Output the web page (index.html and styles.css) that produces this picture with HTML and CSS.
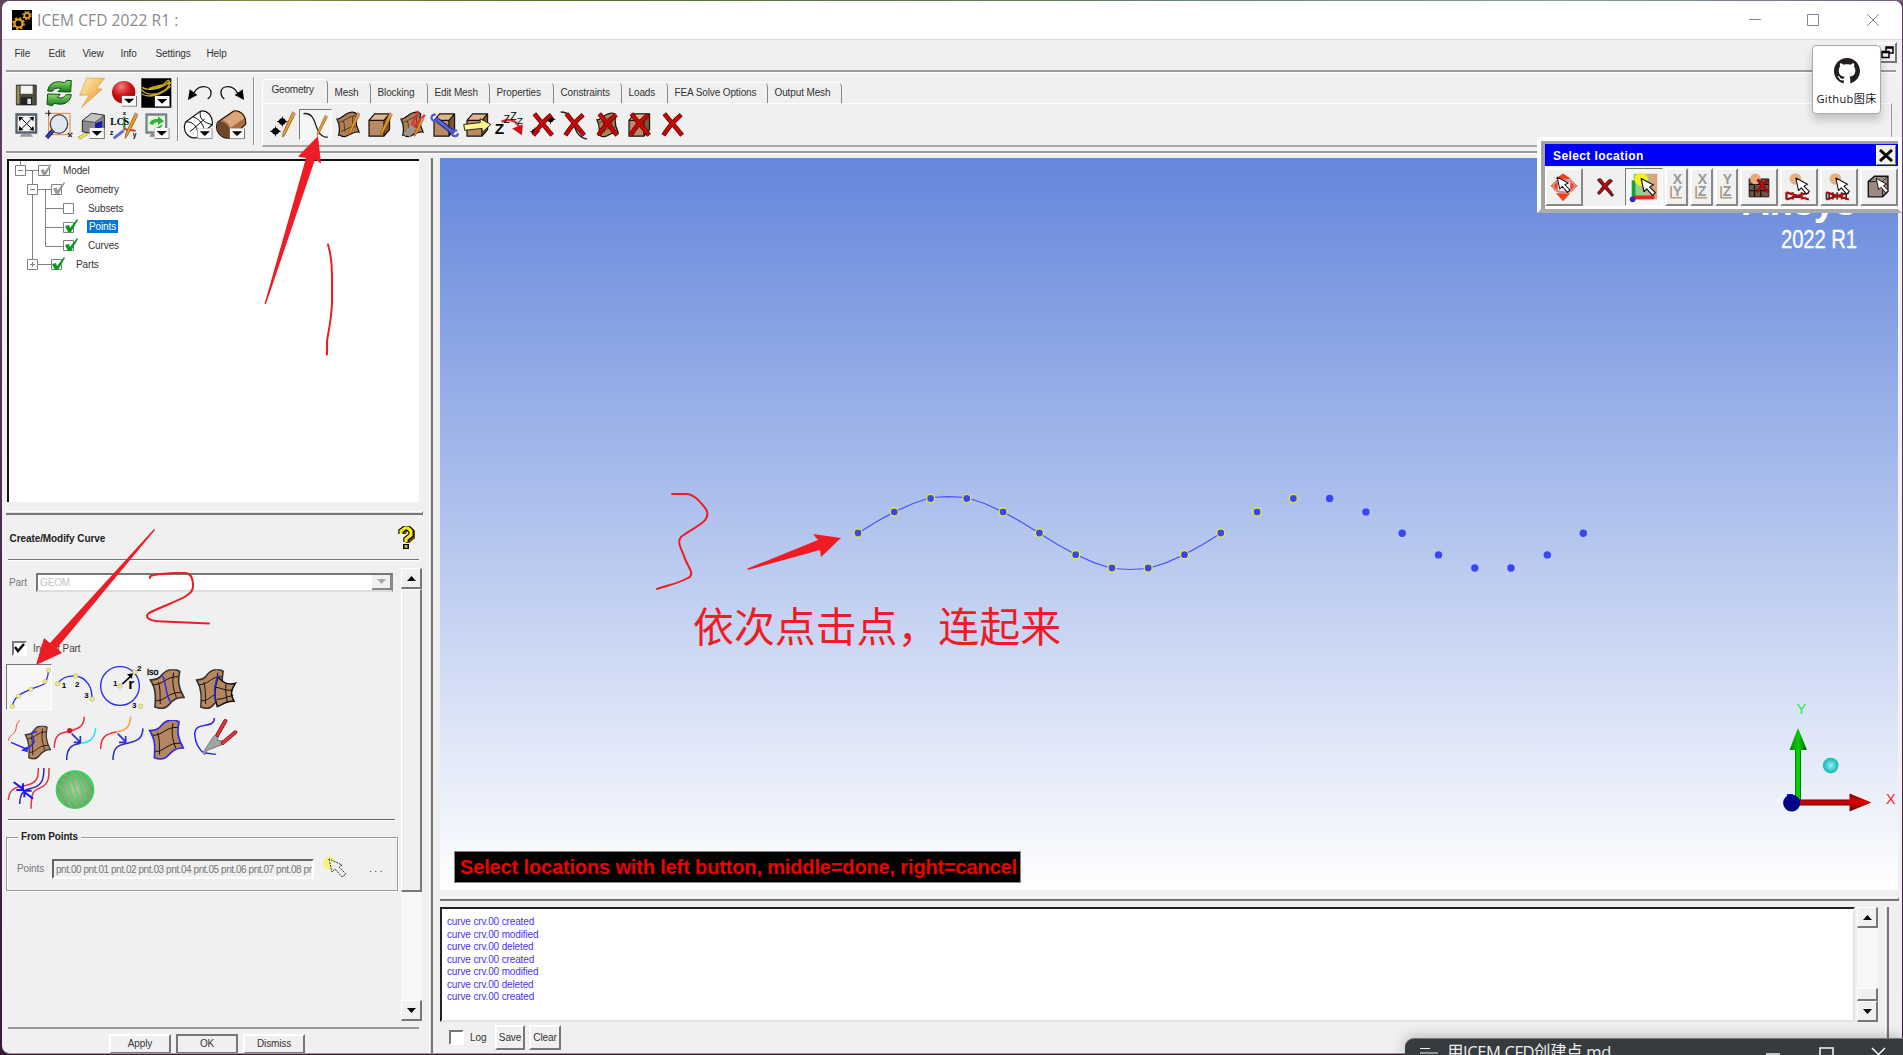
FILE: index.html
```html
<!DOCTYPE html>
<html lang="en">
<head>
<meta charset="utf-8">
<title>ICEM CFD 2022 R1</title>
<link rel="stylesheet" href="styles.css">
</head>
<body>
<svg class="defs" width="0" height="0" aria-hidden="true">
  <defs>
    <linearGradient id="gold" x1="0" y1="0" x2="1" y2="1"><stop offset="0" stop-color="#fff0b8"/><stop offset=".5" stop-color="#f5c067"/><stop offset="1" stop-color="#d07a10"/></linearGradient>
    <radialGradient id="redball" cx=".4" cy=".25" r=".8"><stop offset="0" stop-color="#f08080"/><stop offset=".5" stop-color="#cc1417"/><stop offset="1" stop-color="#8a0004"/></radialGradient>
    <linearGradient id="leaf" x1="0" y1="0" x2="0" y2="1"><stop offset="0" stop-color="#8fdc6a"/><stop offset="1" stop-color="#157a1c"/></linearGradient>
    <radialGradient id="cyanball"><stop offset="0" stop-color="#8ff5f5"/><stop offset="1" stop-color="#12b4b4"/></radialGradient>
    <radialGradient id="greenball"><stop offset="0" stop-color="#b4c8a0"/><stop offset="1" stop-color="#6ba068"/></radialGradient>
    <linearGradient id="hand" x1="0" y1="0" x2="1" y2="0"><stop offset="0" stop-color="#7fd98a"/><stop offset=".5" stop-color="#b9c08a"/><stop offset="1" stop-color="#e59a7a"/></linearGradient>
    <linearGradient id="gcone"><stop offset="0" stop-color="#0a7a0a"/><stop offset=".5" stop-color="#05d005"/><stop offset="1" stop-color="#065c06"/></linearGradient>
    <linearGradient id="rcone" x1="0" y1="0" x2="0" y2="1"><stop offset="0" stop-color="#7a0000"/><stop offset=".45" stop-color="#e00000"/><stop offset="1" stop-color="#6a0000"/></linearGradient>
    <symbol id="pencil" viewBox="0 0 16 30"><path d="M13 1l3 2L5 25l-3 4 .5-5z" fill="#f0a020" stroke="#7a4a10" stroke-width=".8"/><path d="M13 1l3 2-1.500 3-3-2z" fill="#c98"/></symbol>
    <symbol id="surf" viewBox="0 0 32 36" preserveAspectRatio="none"><path d="M3 11C9 11 12 3 20 2c3-1 6 0 8 2-2 8-1 16 3 24-7-2-12 5-18 6-5 1-6-3-8-2C7 24 6 17 3 11z" fill="#b08055" stroke="#111" stroke-width="1.600"/><path d="M6 15c7-1 11-8 20-9M8 27c7-1 10-7 19-6M11 13c2 6 1 10 2 15M23 7c-1 6 0 11 1 16" fill="none" stroke="#3a2614" stroke-width="1"/></symbol>
    <symbol id="cube" viewBox="0 0 26 28"><path d="M2 9h16v17H2z" fill="#b98a63"/><path d="M2 9l6-7h16l-6 7z" fill="#dcb78f"/><path d="M18 9l6-7v17l-6 7z" fill="#7a5637"/><path d="M2 9h16v17H2zM2 9l6-7h16v17l-6 7M18 9l6-7" fill="none" stroke="#1c120a" stroke-width="1.300" stroke-linejoin="round"/></symbol>
    <symbol id="redx" viewBox="0 0 26 28"><path d="M4 2c5 6 12 14 19 23M22 3C15 9 8 17 3 25" fill="none" stroke="#600" stroke-width="5"/><path d="M4 2c5 6 12 14 19 23M22 3C15 9 8 17 3 25" fill="none" stroke="#c00a0a" stroke-width="3.600"/></symbol>
    <symbol id="star" viewBox="0 0 12 12"><path d="M6 0l1 4 5 2-5 2-1 4-1-4-5-2 5-2z"/><circle cx="6" cy="6" r="3.400"/></symbol>
    <symbol id="drop" viewBox="0 0 46 33"><path d="M0 0h46v33H0z" fill="#777"/><path d="M0 0h43v30H0z" fill="#fafafa"/><path d="M7 9h31L22 23z" fill="#000"/></symbol>
    <symbol id="cursor" viewBox="0 0 18 20"><path d="M1 1l3 14 3-3 6 7 3-3-6-6 4-2z" fill="#fff" stroke="#111" stroke-width="1.200" stroke-linejoin="round"/></symbol>
    <symbol id="bigsurf" viewBox="0 0 108 120" preserveAspectRatio="none"><path d="M4 32c18-2 25-2 37-18C58-4 80-2 92 6c-6 30-4 50 13 78-20 0-30 5-44 21-12 14-28 14-43 8C20 86 22 58 4 32z" fill="#b58660"/><path d="M10 46c34 2 40-26 80-24M18 94c30 4 38-28 80-24M28 38c8 26 4 44 6 66M74 10c-6 34 0 50 8 74" fill="none" stroke="#111" stroke-width="3"/></symbol>
    <symbol id="bigedge" viewBox="0 0 108 120" preserveAspectRatio="none"><path d="M4 32c18-2 25-2 37-18C58-4 80-2 92 6c-6 30-4 50 13 78-20 0-30 5-44 21-12 14-28 14-43 8C20 86 22 58 4 32z" fill="none" stroke="currentColor" stroke-width="5"/></symbol>
    <symbol id="greencheck" viewBox="0 0 15 14"><path d="M1 7l4-1 1 3L13 0l1 1L7 13H4z" fill="#0a9a1a"/></symbol>
    <symbol id="graycheck" viewBox="0 0 15 14"><path d="M1 7l4-1 1 3L13 0l1 1L7 13H4z" fill="#999"/></symbol>
  </defs>
</svg>

<main class="window">
  <header class="titlebar">
    <svg class="app-icon" width="20" height="20" viewBox="0 0 20 20"><path d="M0 0h20v20H0z"/><circle cx="6.500" cy="13.500" r="4" fill="none" stroke="#e9a21a" stroke-width="2.200"/><circle cx="6.500" cy="13.500" r="5.600" fill="none" stroke="#e9a21a" stroke-width="1.600" stroke-dasharray="2.200 2.200"/><circle cx="15" cy="5.500" r="2.600" fill="none" stroke="#e9a21a" stroke-width="1.800"/><circle cx="15" cy="5.500" r="4" fill="none" stroke="#e9a21a" stroke-width="1.300" stroke-dasharray="1.600 1.600"/></svg>
    <h1>ICEM CFD 2022 R1 :</h1>
    <svg class="winctl" width="130" height="14" viewBox="0 0 130 14" fill="none" stroke="#888" stroke-width="1"><path d="M0 6.500h12M58.500 1.500h11v11h-11zM118 1l12 12M130 1l-12 12"/></svg>
  </header>

  <nav class="menubar">
    <span>File</span><span>Edit</span><span>View</span><span>Info</span><span>Settings</span><span>Help</span>
  </nav>

  <section class="toolbar">
    <div class="group main-tools">
      <svg viewBox="32 230 97.500 96"><path d="M51 254h60v60H51z" fill="#4c4c3e" stroke="#222" stroke-width="2"/><path d="M64 256h36v24H64z" fill="#f4f4f4"/><path d="M64 291h34v23H64z" fill="#222"/><path d="M84 295h11v16H84z" fill="#ddd"/><path d="M53 256h7v54h-7z" fill="#909048"/></svg>
      <svg viewBox="130 230 97.500 96"><path d="M144 272c4-26 26-32 50-25l8-7 13 1-2 34-38-1 9-9c-12-4-20-1-26 8z" fill="url(#leaf)" stroke="#0b4a10" stroke-width="3"/><path d="M215 283c-4 26-26 33-50 26l-8 7-15-4 2-31 38 1-9 9c12 4 20 1 26-8z" fill="url(#leaf)" stroke="#0b4a10" stroke-width="3"/></svg>
      <svg viewBox="227 230 97.500 96"><path d="M262 233l54 1-25 31 18 1-63 56 24-38-29 1z" fill="url(#gold)" stroke="#c98a30" stroke-width="1.500"/></svg>
      <svg viewBox="325 230 97.500 96"><ellipse cx="372" cy="276" rx="35" ry="34" fill="url(#redball)"/><use href="#drop" x="366" y="286" width="46" height="33"/></svg>
      <svg viewBox="422 230 97.500 96"><path d="M426 234h90v88h-90z"/><path d="M426 268c15 18 45 17 66 4 25-15 22-40 10-29-14 18-33 22-52 21 25-10 42-10 66-16M428 261c20 12 56 7 84-18M428 281c18 12 56 6 86-24" fill="none" stroke="#c9ac15" stroke-width="4"/><use href="#drop" x="466" y="287" width="46" height="33"/></svg>
      <svg viewBox="32 330 97.500 96"><path d="M48 340h66v61H48z" fill="#566068"/><path d="M55 347h52v47H55z" fill="#f5f5f5"/><path d="M68 401h26l8 9H60z" fill="#9a9a9a"/><path d="M66 355l32 32M98 355l-32 32" stroke="#111" stroke-width="3"/><path d="M58 350l14 2-12 12zM104 350l-14 2 12 12zM58 392l14-2-12-12zM104 392l-14-2 12-12z"/></svg>
      <svg viewBox="130 330 97.500 96"><path d="M147 340h64v64h-64z" fill="none" stroke="#e0813c" stroke-width="3"/><path d="M137 340h18M147 331v18M205 399l13 13M218 399l-13 13" stroke="#111" stroke-width="4" stroke-dasharray="4 2"/><path d="M163 388l-22 25" stroke="#112" stroke-width="12"/><path d="M162 390l-20 22" stroke="#3040e0" stroke-width="7"/><ellipse cx="178" cy="372" rx="26" ry="28" fill="#dfe8f2" stroke="#444" stroke-width="4"/></svg>
      <svg viewBox="227 330 97.500 96"><path d="M249 362l28-22 38 6v40l-28 17-38-8z" fill="#8a8a8a" stroke="#222" stroke-width="3"/><path d="M249 362l28-22 38 6-28 21z" fill="#c4c4c4" stroke="#222" stroke-width="2"/><path d="M287 370l22-8v20l-22 6z" fill="#1a1aa8"/><path d="M236 411l24-12 5 5-23 14z" fill="#f2ef30" stroke="#333"/><use href="#drop" x="270" y="384" width="47" height="33"/></svg>
      <svg viewBox="325 330 97.500 96"><path d="M374 350v40" stroke="#1e8a2c" stroke-width="6"/><path d="M374 388l34 4" stroke="#d33" stroke-width="6"/><path d="M372 392l-30 23" stroke="#66c" stroke-width="9"/><g font-weight="700" font-family="Liberation Sans"><text x="332" y="376" font-family="Liberation Serif" font-size="30" textLength="56" lengthAdjust="spacingAndGlyphs">LCS</text><text x="369" y="346" font-size="18">x</text><text x="331" y="406" font-size="20">z</text><text x="399" y="410" font-size="20">y</text></g><use href="#pencil" x="370" y="336" width="46" height="82"/></svg>
      <svg viewBox="422 330 97.500 96"><path d="M438 340h66v61h-66z" fill="#7a848a"/><path d="M445 347h52v47h-52z" fill="#e4f5e4"/><path d="M456 401h24l8 9h-38z" fill="#888"/><path d="M450 371q5-16 26-14v-8l18 14-18 12v-8q-12-2-16 8zM490 372q-4 18-26 16" fill="#2fb236"/><use href="#drop" x="465" y="384" width="46" height="33"/></svg>
    </div>
    <i class="vsep"></i>
    <div class="group edit-tools">
      <svg viewBox="549 230 97.500 96"><path d="M580 281c14-30 50-27 53-5 1 10-4 16-10 20" fill="none" stroke="#111" stroke-width="4"/><path d="M564 299l5-32 23 17z"/></svg>
      <svg viewBox="646 230 97.500 96"><path d="M715 281c-14-30-50-27-51-5 0 10 4 16 10 20" fill="none" stroke="#111" stroke-width="4"/><path d="M733 299l-4-32-24 17z"/></svg>
      <svg viewBox="549 330 97.500 96"><path d="M557 366l44-32c18-6 38 12 36 40l-44 38c-28 8-48-20-36-46z" fill="#fff" stroke="#111" stroke-width="3.500"/><path d="M557 366c24-4 40 20 36 46M601 334c-4 20 8 34 36 40M578 350c14 4 32 18 34 40M570 395l44-38" fill="none" stroke="#111" stroke-width="3"/><use href="#drop" x="592" y="385" width="46" height="33"/></svg>
      <svg viewBox="646 330 97.500 96"><path d="M654 366l48-33c18-4 38 12 36 40l-44 40c-28 8-52-20-40-47z" fill="#a86e3e" stroke="#1c120a" stroke-width="3.500"/><path d="M654 366c24-6 42 20 40 47-24 4-48-20-40-47z" fill="#6d452a"/><path d="M668 360l36-25c16 0 24 8 30 20l-42 28c-4-10-12-20-24-23z" fill="#dca67a"/><use href="#drop" x="690" y="385" width="46" height="33"/></svg>
    </div>
    <i class="vsep tall"></i>
    <div class="notebook">
      <div class="tabs">
        <span class="tab active t0">Geometry</span><span class="tab t1">Mesh</span><span class="tab t2">Blocking</span><span class="tab t3">Edit Mesh</span><span class="tab t4">Properties</span><span class="tab t5">Constraints</span><span class="tab t6">Loads</span><span class="tab t7">FEA Solve Options</span><span class="tab t8">Output Mesh</span>
      </div>
      <div class="tabpage">
        <svg viewBox="0 0 32 32"><use href="#star" x="2" y="17" width="12" height="12"/><use href="#star" x="9" y="7" width="12" height="12"/><use href="#pencil" x="13" y="2" width="16" height="28"/></svg>
        <svg class="sunk" viewBox="0 0 32 32"><path d="M3 4c18-2 9 26 27 26" fill="none" stroke="#222" stroke-width="1.500"/><use href="#pencil" x="15" y="5" width="16" height="24"/></svg>
        <svg viewBox="0 0 32 32"><use href="#surf" x="2" y="2" width="26" height="28"/><use href="#pencil" x="14" y="3" width="15" height="25"/></svg>
        <svg viewBox="0 0 32 32"><use href="#cube" x="2" y="3" width="26" height="27"/><use href="#pencil" x="14" y="3" width="15" height="26"/></svg>
        <svg viewBox="0 0 32 32"><use href="#surf" x="1" y="2" width="26" height="28"/><path d="M14 18L21 2M16 19L28 6" stroke="#e0303a" stroke-width="2.500"/><path d="M7 27l8-10M11 28l6-9" stroke="#999" stroke-width="3"/><use href="#pencil" x="15" y="8" width="13" height="21"/></svg>
        <svg viewBox="0 0 32 32"><use href="#cube" x="2" y="3" width="26" height="27"/><path d="M6 10l19 15" stroke="#1a1a70" stroke-width="5"/><path d="M6 10l19 15" stroke="#5a68e0" stroke-width="3"/><circle cx="5" cy="9" r="3.200" fill="none" stroke="#4a55d0" stroke-width="2.200" stroke-dasharray="16 5"/><circle cx="26" cy="25" r="3" fill="none" stroke="#4a55d0" stroke-width="2.200" stroke-dasharray="16 5"/></svg>
        <svg viewBox="0 0 32 32"><use href="#cube" x="2" y="3" width="26" height="27"/><path d="M1 16l17-2v-4l11 6-9 8v-4L2 22z" fill="#fbf58c" stroke="#222"/></svg>
        <svg viewBox="0 0 32 32"><path d="M7 13q14-6 20 9" stroke="#d0353a" stroke-width="2.500" fill="none"/><path d="M18 20l11-4-1 11z" fill="#d01018"/><g font-family="Liberation Sans"><text x="0" y="26" font-weight="700" font-size="16">Z</text><text x="9" y="14" font-size="11">Z</text><text x="16" y="11" font-size="11">Z</text><text x="23" y="15" font-size="10">Z</text></g></svg>
        <svg viewBox="0 0 32 32"><use href="#star" x="18" y="5" width="11" height="11"/><use href="#star" x="2" y="18" width="11" height="11"/><use href="#redx" x="3" y="3" width="25" height="27"/></svg>
        <svg viewBox="0 0 32 32"><path d="M1 3c18 0 9 25 27 28" fill="none" stroke="#222" stroke-width="1.500"/><use href="#redx" x="3" y="3" width="25" height="27"/></svg>
        <svg viewBox="0 0 32 32"><use href="#surf" x="2" y="3" width="25" height="27"/><use href="#redx" x="3" y="3" width="25" height="27"/></svg>
        <svg viewBox="0 0 32 32"><use href="#cube" x="2" y="3" width="26" height="27"/><use href="#redx" x="3" y="3" width="25" height="27"/></svg>
        <svg viewBox="0 0 32 32"><use href="#redx" x="3" y="3" width="25" height="27"/></svg>
      </div>
    </div>
  </section>

  <div class="workspace">
    <aside class="side">
      <div class="tree">
        <svg width="90" height="120" viewBox="9 161 90 120" fill="none" stroke="#808080">
          <path d="M20.500 161v5M25 170.500h13M32.500 171v88M37.500 189.500h14M45.500 190v56M45.500 208.500h18M45.500 227.500h18M45.500 246.500h18M38 264.500h14"/>
          <g fill="#fff"><path d="M15.500 165.500h10v10h-10zM27.500 184.500h10v10h-10zM27.500 259.500h10v10h-10zM38.500 165.500h11v10h-11zM51.500 184.500h10v10h-10zM63.500 203.500h10v10h-10zM63.500 222.500h10v10h-10zM63.500 240.500h10v10h-10zM51.500 259.500h10v10h-10z"/></g>
          <path d="M18 170.500h5M30 189.500h5M30 264.500h5M32.500 262v5"/>
          <g stroke="none"><use href="#graycheck" x="39" y="164" width="14" height="12"/><use href="#graycheck" x="52" y="182" width="14" height="13"/><use href="#greencheck" x="64" y="219" width="15" height="14"/><use href="#greencheck" x="64" y="238" width="15" height="14"/><use href="#greencheck" x="51" y="257" width="15" height="14"/></g>
        </svg>
        <ul>
          <li class="l0">Model</li><li class="l1">Geometry</li><li class="l2">Subsets</li><li class="l2"><mark>Points</mark></li><li class="l2">Curves</li><li class="l1">Parts</li>
        </ul>
      </div>
      <div class="sash"></div>
      <div class="panel-head">
        <h2>Create/Modify Curve</h2>
        <svg width="17" height="25" viewBox="0 0 17 25"><path d="M6 8V6l3-3h3l3 3v5l-5 4v2" fill="none" stroke="#6a4208" stroke-width="4.500"/><path d="M3 8V5l4-3h3l3 3v4l-5 4v3" fill="none" stroke="#000" stroke-width="5.400"/><path d="M3 8V5l4-3h3l3 3v4l-5 4v3" fill="none" stroke="#f5ee10" stroke-width="3.200"/><path d="M5 18h6v5H5z"/><path d="M6.500 19h3v3h-3z" fill="#c8c010"/></svg>
      </div>
      <div class="panel">
        <div class="form">
          <div class="part-row"><label>Part</label><div class="combo"><span>GEOM</span><i><svg width="9" height="5"><path d="M0 0h9L4.500 5z" fill="#a8a8a8"/></svg></i></div></div>
          <div class="check-row"><i class="check"><svg width="11" height="11" viewBox="0 0 11 11"><path d="M1 4l3 4 6-7" fill="none" stroke="#000" stroke-width="2.400"/></svg></i><label>Inherit Part</label></div>
          <div class="tools">
            <svg class="sunk" viewBox="17 26 138 138"><path d="M34 156c4-32 30-42 58-54 36-14 46-14 49-29 5-14 6-22 6-31" fill="none" stroke="#2a2af0" stroke-width="4"/><g fill="#f0eb80" stroke="#86834a"><circle cx="34" cy="156" r="7"/><circle cx="53" cy="124" r="7"/><circle cx="92" cy="102" r="7"/><circle cx="136" cy="78" r="7"/><circle cx="148" cy="43" r="7"/></g></svg>
            <svg viewBox="155 26 138 138"><path d="M172 85c14-20 34-24 54-23 34 4 52 38 48 69" fill="none" stroke="#2a2af0" stroke-width="4"/><g fill="#f0eb80" stroke="#86834a"><circle cx="172" cy="85" r="7"/><circle cx="226" cy="62" r="7"/><circle cx="275" cy="131" r="7"/></g><g font-family="Liberation Sans" font-weight="700" font-size="24"><text x="184" y="97">1</text><text x="224" y="94">2</text><text x="252" y="127">3</text></g></svg>
            <svg viewBox="293 26 138 138"><circle cx="359" cy="92" r="58" fill="none" stroke="#2a2af0" stroke-width="4"/><path d="M366 86l28-26" stroke="#000" stroke-width="5"/><path d="M398 54l-18 3 14 13z"/><g fill="#f0eb80" stroke="#86834a"><circle cx="359" cy="92" r="7"/><circle cx="403" cy="50" r="7"/><circle cx="421" cy="153" r="7"/></g><g font-family="Liberation Sans" font-weight="700" font-size="24"><text x="338" y="91">1</text><text x="410" y="48">2</text><text x="395" y="158">3</text><text x="384" y="101" font-size="46">r</text></g></svg>
            <svg viewBox="431 26 138 138"><use href="#bigsurf" x="446" y="42" width="108" height="120"/><use href="#bigedge" x="446" y="42" width="108" height="120"/><path d="M487 62c12 22 8 60 24 78" fill="none" stroke="#2a2af0" stroke-width="4.500"/><text x="439" y="60" font-family="Liberation Sans" font-size="27" stroke="#000">Iso</text></svg>
            <svg viewBox="577 26 138 138"><use href="#bigsurf" x="584" y="42" width="98" height="120"/><use href="#bigedge" x="584" y="42" width="98" height="120"/><path d="M652 66c14 14 26 24 52 18-12 18-16 30-4 54-20-4-34 10-50 16-10-26-10-56 2-88z" fill="#b58660" stroke="#111" stroke-width="4.500"/><path d="M646 96c18 2 28 12 50 8M648 132c20 0 30-8 50-12M676 84c-2 20 0 38 4 58" fill="none" stroke="#111" stroke-width="3"/><path d="M654 60c-14 24-14 46-10 76" fill="none" stroke="#2a2af0" stroke-width="4"/></svg>
            <svg viewBox="17 180 138 138"><use href="#bigsurf" x="72" y="212" width="80" height="102"/><use href="#bigedge" x="72" y="212" width="80" height="102"/><path d="M59 197c-16 10-8 24-16 34-10 14-18 12-18 26" fill="none" stroke="#f04040" stroke-width="3"/><path d="M32 262l46 20M110 230c-22 0-16 12-10 24 6 14-14 20-24 32" fill="none" stroke="#2a2af0" stroke-width="4.500"/><path d="M62 286l20-12v18z" fill="#2a2af0"/></svg>
            <svg viewBox="155 180 138 138"><path d="M162 278c0-50 30-44 50-51 26-8 38-12 40-42" fill="none" stroke="#f03038" stroke-width="4.500"/><path d="M199 315c0-36 14-46 42-50" fill="none" stroke="#2a2ad0" stroke-width="4.500"/><path d="M240 265c34-4 44-20 46-46" fill="none" stroke="#20e4f0" stroke-width="4.500"/><circle cx="208" cy="227" r="8" fill="#d01830"/><path d="M214 236l24 24M240 243v19h-20" stroke="#2a2af0" stroke-width="5" fill="none"/></svg>
            <svg viewBox="293 180 138 138"><path d="M301 282c0-34 14-46 48-51" fill="none" stroke="#f03038" stroke-width="4.500"/><path d="M349 231c30-4 40-18 42-46" fill="none" stroke="#f8a040" stroke-width="4.500"/><path d="M338 315c0-46 24-46 46-51 32-8 42-16 44-44" fill="none" stroke="#2a2ad0" stroke-width="4.500"/><path d="M352 236l24 24M376 243v19h-20" stroke="#2a2af0" stroke-width="5" fill="none"/></svg>
            <svg viewBox="431 180 138 138"><use href="#bigsurf" x="444" y="195" width="108" height="120"/><use href="#bigedge" x="444" y="195" width="108" height="120" color="#2a2af0"/></svg>
            <svg viewBox="577 180 138 138"><path d="M641 189c0 36-56 6-59 48 2 28 10 46 30 58" fill="none" stroke="#2a2af0" stroke-width="4.500"/><path d="M606 294l30-46c6-10 14-10 18-6l-4 14 18 2c2 8-4 12-12 14l-36 14-8 14z" fill="#a4a4a4" stroke="#555" stroke-width="2"/><path d="M650 240l24-42M666 264l38-32" stroke="#8c1c22" stroke-width="12" stroke-linecap="round"/><path d="M650 240l24-42M666 264l38-32" stroke="#e0353c" stroke-width="7" stroke-linecap="round"/><path d="M614 294l32 4" stroke="#2a2af0" stroke-width="4"/></svg>
            <svg viewBox="17 332 138 138"><path d="M24 434c2-40 34-40 54-44 34-8 36-24 36-52M92 460c2-64 10-52 34-66 20-12 20-28 20-56" fill="none" stroke="#e8323c" stroke-width="4.500"/><path d="M58 446c2-48 24-42 44-50 26-10 28-28 29-58" fill="none" stroke="#2a2ab0" stroke-width="4.500"/><path d="M40 380l26 20M48 404h20v-20M98 430l-26-20M94 406H72v20" stroke="#1a1af0" stroke-width="6" fill="none"/></svg>
            <svg viewBox="155 332 138 138"><circle cx="224" cy="403" r="56" fill="url(#greenball)" stroke="#3ad05a" stroke-width="4"/><path d="M170 392c26-10 24 46 44 62M178 372c34-6 28 56 56 84M190 358c42 4 26 66 60 92M208 350c44 12 24 66 58 86M228 348c36 16 22 52 48 70M248 354c18 10 20 26 30 40M168 412c14 4 12 20 22 32" fill="none" stroke="#38e05a" stroke-width="4"/></svg>
          </div>
          <div class="rule"></div>
          <div class="fieldset">
            <h3>From Points</h3>
            <label>Points</label>
            <div class="entry">pnt.00 pnt.01 pnt.02 pnt.03 pnt.04 pnt.05 pnt.06 pnt.07 pnt.08 pr</div>
            <svg width="24" height="22" viewBox="0 0 24 22"><circle cx="6.500" cy="7" r="6.500" fill="#f6f27a"/><path d="M6 4l3 13 3-3 7 8 4-3-7-7 3-2z" fill="#eee" stroke="#333" stroke-dasharray="2 1" transform="translate(0 -1)"/></svg>
            <b>. . .</b>
          </div>
        </div>
        <div class="scroll">
          <i class="sbtn"><svg width="9" height="5"><path d="M4.500 0L9 5H0z"/></svg></i>
          <i class="thumb"></i><i class="gap"></i>
          <i class="sbtn"><svg width="9" height="5"><path d="M0 0h9L4.500 5z"/></svg></i>
        </div>
      </div>
      <div class="buttons"><button>Apply</button><button class="default">OK</button><button>Dismiss</button></div>
    </aside>
    <div class="vsash"></div>
    <section class="right">
      <svg class="viewport" width="1458" height="732" viewBox="440 158 1458 732" font-family="Liberation Sans">
        <defs><linearGradient id="sky" x1="0" y1="0" x2="0" y2="1"><stop offset="0" stop-color="#6487dc"/><stop offset="1" stop-color="#fff"/></linearGradient></defs>
        <path d="M440 158h1458v732H440z" fill="url(#sky)"/>
        <text x="1742" y="215" font-size="40" font-weight="700" fill="#fff" textLength="114" lengthAdjust="spacingAndGlyphs">Ansys</text>
        <text x="1781" y="248" font-size="25" fill="#fff" stroke="#fff" stroke-width=".3" textLength="76" lengthAdjust="spacingAndGlyphs">2022 R1</text>
        <polyline fill="none" stroke="#4a52f5" stroke-width="1.200" points="858,533.2 876,522 894.3,511.900 912.500,503.800 930.600,497.500 948.700,496.700 966.800,497.500 985,503.800 1003.100,511.900 1021.300,522 1039.400,533.200 1057.500,544.400 1075.700,554.500 1094,562.600 1112,568.500 1130,569.500 1148.200,568.500 1166.400,562.600 1184.500,554.500 1202.700,544.400 1220.800,533.200"/>
        <g fill="#3a45f8" stroke="#f3f312" stroke-width="1.200">
          <circle cx="858" cy="533" r="4"/><circle cx="894.300" cy="511.900" r="4"/><circle cx="930.600" cy="498.500" r="4"/><circle cx="966.800" cy="498.500" r="4"/><circle cx="1003.100" cy="511.900" r="4"/><circle cx="1039.400" cy="533" r="4"/><circle cx="1075.700" cy="554.700" r="4"/><circle cx="1112" cy="568" r="4"/><circle cx="1148.200" cy="568" r="4"/><circle cx="1184.500" cy="554.700" r="4"/><circle cx="1220.800" cy="533" r="4"/><circle cx="1257.100" cy="511.900" r="4"/><circle cx="1293.400" cy="498.500" r="4"/>
        </g>
        <g fill="#3a45f8">
          <circle cx="1329.600" cy="498.500" r="3.700"/><circle cx="1365.900" cy="511.900" r="3.700"/><circle cx="1402.200" cy="533.200" r="3.700"/><circle cx="1438.500" cy="554.900" r="3.700"/><circle cx="1474.800" cy="568" r="3.700"/><circle cx="1511" cy="568" r="3.700"/><circle cx="1547.300" cy="554.900" r="3.700"/><circle cx="1583.300" cy="533.200" r="3.700"/>
        </g>
        <path d="M1795.500 749h5v52h-5z" fill="#05d005" stroke="#077a07"/><path d="M1798 728l9 22h-17.500z" fill="url(#gcone)"/>
        <path d="M1799 800h52v5h-52z" fill="#c40000" stroke="#700"/><path d="M1871.500 802.500L1849.500 811.500v-18z" fill="url(#rcone)"/>
        <path d="M1787 794h6v4h-6z" fill="#1010ff"/><circle cx="1791.700" cy="803" r="8.600" fill="#000088"/>
        <circle cx="1830.700" cy="765.500" r="7.800" fill="url(#cyanball)"/>
        <text x="1796.500" y="714" font-size="14.500" fill="#22ee33">Y</text><text x="1886" y="804" font-size="14.500" fill="#ff2020">X</text>
        <path d="M454.500 851.500h566v31h-566z" stroke="#888"/>
        <text x="460" y="873.500" font-size="19.500" font-weight="700" fill="#f00000" textLength="557" lengthAdjust="spacingAndGlyphs">Select locations with left button, middle=done, right=cancel</text>
      </svg>
      <div class="sash"></div>
      <div class="log-area">
        <pre class="log">curve crv.00 created
curve crv.00 modified
curve crv.00 deleted
curve crv.00 created
curve crv.00 modified
curve crv.00 deleted
curve crv.00 created</pre>
        <div class="scroll">
          <i class="sbtn"><svg width="9" height="5"><path d="M4.500 0L9 5H0z"/></svg></i>
          <i class="gap"></i><i class="thumb small"></i>
          <i class="sbtn"><svg width="9" height="5"><path d="M0 0h9L4.500 5z"/></svg></i>
        </div>
        <div class="vsash edge"></div>
      </div>
      <div class="log-foot"><i class="check"></i><label>Log</label><button>Save</button><button>Clear</button></div>
    </section>
  </div>
</main>

<div class="mdi"><svg width="13" height="13" viewBox="0 0 13 13" fill="none" stroke="#000" stroke-width="1.500"><path d="M5 5V1h7v6H8M5 2h7M1 5.500h7v6H1zM1 6.500h7"/></svg></div>

<section class="float">
  <header><span>Select location</span><i><svg width="14" height="13" viewBox="0 0 14 13"><path d="M1 1l12 11M13 1L1 12" stroke="#000" stroke-width="3"/></svg></i></header>
  <div class="float-tools">
    <svg class="up w38" viewBox="0 0 38 38"><path d="M18 4l9 6H9zM18 35l8-9H10zM4 18l8-8v14zM34 18l-8-8v14z" fill="#f0401c"/><ellipse cx="19" cy="18" rx="12" ry="7" fill="none" stroke="#d88" stroke-width="2.500"/><use href="#cursor" x="10" y="7" width="18" height="19"/></svg>
    <svg class="w38" viewBox="0 0 38 38"><path d="M13 11l15 17M27 12L13 26" stroke="#333" stroke-width="3"/><use href="#redx" x="12" y="10" width="16" height="17"/></svg>
    <svg class="down w38" viewBox="0 0 38 38"><path d="M8 5h25v27H8z" fill="url(#hand)"/><path d="M8 32V12" stroke="#1aa040" stroke-width="4"/><path d="M8 30h22" stroke="#e02828" stroke-width="4"/><circle cx="7" cy="32" r="3" fill="#2030d0"/><circle cx="16" cy="11" r="7" fill="#f8f020"/><use href="#cursor" x="14" y="9" width="20" height="20"/></svg>
    <svg class="up w23" viewBox="0 0 23 38"><text x="7" y="15" class="axis">X</text><text x="7" y="30" class="axis">Y</text><path d="M5 18v14h13" fill="none" stroke="#b99a7a" stroke-width="2"/></svg>
    <svg class="up w23" viewBox="0 0 23 38"><text x="7" y="15" class="axis">X</text><text x="7" y="30" class="axis">Z</text><path d="M5 18v14h13" fill="none" stroke="#b99a7a" stroke-width="2"/></svg>
    <svg class="up w23" viewBox="0 0 23 38"><text x="7" y="15" class="axis">Y</text><text x="7" y="30" class="axis">Z</text><path d="M5 18v14h13" fill="none" stroke="#b99a7a" stroke-width="2"/></svg>
    <svg class="up w38" viewBox="0 0 38 38"><path d="M8 10h22v20H8z" fill="#6e5442" stroke="#111"/><path d="M8 16h22M8 23h22M14 10v20M21 10v20" stroke="#111" stroke-width="1.500"/><circle cx="15" cy="10" r="6" fill="#e8a878"/><use href="#redx" x="15" y="9" width="16" height="18"/></svg>
    <svg class="up w38" viewBox="0 0 38 38"><circle cx="15" cy="10" r="6.500" fill="#e8b080"/><path d="M5 25l25 8M5 33l25-8M5 25v8M12 25v8M22 25v8" stroke="#a01010" stroke-width="2.500"/><use href="#cursor" x="14" y="8" width="19" height="20"/></svg>
    <svg class="up w38" viewBox="0 0 38 38"><circle cx="15" cy="10" r="6.500" fill="#e8b080"/><path d="M5 25v8M8 25v8M12 25v8M17 25v8M22 25v8M27 25v8" stroke="#433" stroke-width="2"/><path d="M5 25l25 8M5 33l25-8" stroke="#a01010" stroke-width="2.500"/><use href="#cursor" x="14" y="8" width="19" height="20"/></svg>
    <svg class="up w38" viewBox="0 0 38 38"><path d="M7 13l7-6h15v17l-6 6H7z" fill="#9c8a80" stroke="#111" stroke-width="1.500"/><path d="M7 13h16l6-6M23 13v17" fill="none" stroke="#111"/><use href="#cursor" x="15" y="8" width="16" height="19"/></svg>
  </div>
</section>

<aside class="gh-card">
  <svg width="26" height="26" viewBox="0 0 16 16"><path fill="#231f20" d="M8 0C3.580 0 0 3.580 0 8c0 3.540 2.290 6.530 5.470 7.590.4.070.55-.17.55-.38 0-.19-.01-.82-.01-1.490-2.010.37-2.530-.49-2.690-.94-.09-.23-.48-.94-.82-1.130-.28-.15-.68-.52-.01-.53.63-.01 1.080.58 1.230.82.72 1.210 1.870.87 2.330.66.070-.52.28-.87.51-1.070-1.780-.2-3.640-.89-3.640-3.950 0-.87.31-1.590.82-2.150-.08-.2-.36-1.020.08-2.120 0 0 .67-.21 2.200.82.640-.18 1.320-.27 2-.27s1.360.090 2 .27c1.530-1.040 2.200-.82 2.200-.82.440 1.100.160 1.920.080 2.120.510.560.820 1.270.820 2.150 0 3.070-1.870 3.750-3.650 3.950.290.250.540.730.540 1.480 0 1.070-.01 1.930-.01 2.200 0 .210.150.460.550.380A8.010 8.010 0 0 0 16 8c0-4.420-3.580-8-8-8z"/></svg>
  <span>Github图床</span>
</aside>

<section class="editor">
  <svg width="18" height="10" viewBox="0 0 18 10"><path d="M0 1.500h10M0 6h18" stroke="#eee" stroke-width="1.200"/></svg>
  <span>用ICEM CFD创建点.md</span>
  <svg width="120" height="12" viewBox="0 0 120 12" fill="none" stroke="#f2f2f2" stroke-width="1.600"><path d="M0 7h14M54 1h13v13H54zM106 1l13 13M119 1l-13 13"/></svg>
</section>

<svg class="ink" width="1903" height="1055" viewBox="0 0 1903 1055" fill="#ee1c24">
  <path d="M264.500 304L306 158l-8-1.500L318 136l3 27.500-6-4L266 304z"/>
  <path d="M154 529L50 643l-6-5-8 27 26-12-5-5 98-118z"/>
  <path d="M747.500 568.500L818 540l-5-6 28 4-20 19-1-7-72 20z"/>
  <g fill="none" stroke="#ee1c24" stroke-width="2" stroke-linecap="round" stroke-linejoin="round">
    <path d="M328 244.500c3 10 4 16 4 31v28c-1 20-4.500 32-5 38v13"/>
    <path d="M150 578c-1-3 4-3.500 24-5h11c7 0 8 7 8 13 1 11-22 16-44 27-4 3-3 8 14 8.500l46 2"/>
    <path d="M672 494h13c9-1 16 9 21 15 7 13-13 18-25 28-5 6 2 14 4 22 4 9 10 16 3 19-9 5-19 7-31 11"/>
  </g>
</svg>
<p class="note">依次点击点，连起来</p>
</body>
</html>
```
FILE: styles.css
```css
* { box-sizing: border-box; }
body {
  margin: 0; width: 1903px; height: 1055px; overflow: hidden; position: relative;
  padding: 1px 1px 0 2px;
  font: 10px/12px "Liberation Sans", Arial, sans-serif; letter-spacing: -.12px; color: #333;
  background: linear-gradient(90deg, #5d4560, #7a8a42 14%, #55702f 30%, #6a7f6c 60%, #7aa09c 82%, #76627c) 0 0 / 100% 2px no-repeat, linear-gradient(#5d4560, #3a1838);
}
.defs { position: absolute; }
h1, h2, h3, p, ul, pre { margin: 0; padding: 0; font: inherit; list-style: none; }
i { font-style: normal; display: block; }
svg { display: block; flex: none; }

.window { height: 1053px; background: #f0f0f0; border-radius: 8px 8px 0 8px; overflow: hidden; display: flex; flex-direction: column; border-bottom: 1px solid #999; }
.titlebar { height: 39px; flex: none; background: #fff; border-bottom: 1px solid #d8dada; display: flex; align-items: center; padding: 0 23px 0 10px; }
.titlebar h1 { font: 15.500px/20px "Open Sans", "Noto Sans", sans-serif; color: #8b8b8b; margin: -1px 0 0 5px; letter-spacing: .1px; }
.winctl { margin-left: auto; }

.menubar { height: 32px; flex: none; display: flex; align-items: center; margin: 0 6px 0 4px; padding: 0 0 2px 8.500px; border-bottom: 2px solid #9a9a9a; box-shadow: 0 1px #fff; }
.menubar span:nth-child(1) { width: 34px; }
.menubar span:nth-child(2) { width: 34px; }
.menubar span:nth-child(3) { width: 38px; }
.menubar span:nth-child(4) { width: 35px; }
.menubar span:nth-child(5) { width: 51px; }

.toolbar { height: 81px; flex: none; display: flex; margin: 0 6px 0 4px; padding-top: 5px; border-bottom: 2px solid #9a9a9a; box-shadow: 0 1px #fff; }
.group { display: grid; gap: 1px 0; align-content: start; }
.group svg { width: 32.500px; height: 32px; }
.main-tools { grid-template-columns: repeat(5, 32.500px); margin-left: 4px; }
.edit-tools { grid-template-columns: repeat(2, 32.500px); margin-left: 4px; }
.vsep { width: 2px; height: 64px; background: #8c8c8c; border-right: 1px solid #fff; margin-left: 4px; }
.vsep.tall { height: 68px; margin-left: 5px; }

.notebook { flex: 1; display: flex; flex-direction: column; margin: 2px 4px 4px 7px; }
.tabs { display: flex; align-items: flex-end; height: 24px; }
.tab { height: 21px; border-right: 1px solid #888; border-top: 1px solid #fff; border-radius: 0 5px 0 0; padding: 4px 0 0 6.500px; white-space: nowrap; }
.tab.active { height: 24px; border-left: 1px solid #fff; border-radius: 5px 5px 0 0; padding: 4px 0 0 9px; letter-spacing: -.2px; }
.t0 { width: 66.500px; } .t1 { width: 43px; } .t2 { width: 57px; } .t3 { width: 62px; } .t4 { width: 64px; }
.t5 { width: 68px; } .t6 { width: 46px; } .t7 { width: 100px; } .t8 { width: 74px; }
.tabpage { flex: 1; display: flex; padding: 5px 0 0 4px; border: solid; border-width: 1px 1px 2px 1px; border-color: #fff #999 #aaa #fff; }
.tabpage svg { width: 32.500px; height: 31px; }
.sunk { background: #f6f6f6; border: 1px solid; border-color: #777 #fff #fff #777; }

.workspace { flex: 1; display: flex; padding: 5px 0 0 4px; min-height: 0; }
.side { width: 417px; display: flex; flex-direction: column; }
.tree { height: 343px; width: 412px; margin: 1px 0 0 1px; background: #fff; border: 2px solid #111; border-right: 0; border-bottom: 0; display: grid; flex: none; }
.tree > * { grid-area: 1 / 1; }
.tree ul { padding-top: 1px; }
.tree li { height: 18.750px; line-height: 18.750px; }
.tree .l0 { padding-left: 54px; } .tree .l1 { padding-left: 67px; } .tree .l2 { padding-left: 79px; }
.tree mark { background: #0078d7; color: #fff; padding: 1px 2px; margin-left: -1px; }
.sash { height: 4px; flex: none; border-top: 1px solid #fff; border-bottom: 2px solid #777; background: #e4e4e4; border-right: 1px solid #888; }
.side .sash { margin-top: 9px; }
.panel-head { height: 45px; flex: none; margin: 0 4px 0 2px; border-bottom: 1px solid #777; box-shadow: 0 1px #fff; display: flex; justify-content: space-between; align-items: center; padding: 3px 4px 0 0; }
.panel-head h2 { font-weight: 700; letter-spacing: -.08px; color: #222; margin-left: 1.500px; }
h3 { font-weight: 700; color: #222; }
.panel { flex: 1; display: flex; justify-content: space-between; margin-top: 8px; min-height: 0; padding-right: 1px; }
.form { width: 393px; }
.form label { color: #777; }
.part-row { display: flex; align-items: center; padding: 5px 0 0 3px; height: 24px; }
.part-row label { width: 27px; }
.combo { flex: none; width: 357px; height: 19px; background: #fff; border: 2px solid; border-color: #777 #888 #ddd #777; display: flex; justify-content: space-between; color: #c4c4c4; line-height: 16px; padding-left: 2px; }
.combo i { width: 19px; background: #f0f0f0; border-bottom: 2px solid #888; border-right: 1px solid #888; display: grid; place-items: center; }
.check-row { display: flex; align-items: center; gap: 6px; margin: 48px 0 0 6px; height: 17px; }
.check-row label { color: #444; }
.check { width: 15px; height: 15px; background: #fff; border: 2px solid; border-color: #777 #fff #fff #777; }
.tools { display: grid; grid-template-columns: 46px 46px 46px 48.500px 46px; grid-auto-rows: 46px; row-gap: 5px; margin: 7px 0 0; }
.tools svg { width: 46px; height: 46px; }
.rule { margin: 7px 0 0 2px; width: 387px; border-top: 1px solid #666; border-bottom: 1px solid #fff; }
.fieldset { position: relative; width: 392px; height: 54px; margin-top: 16px; border: 1px solid #999; box-shadow: inset 1px 1px #fff, 1px 1px #fff; display: flex; align-items: center; padding: 9px 0 0 10px; }
.fieldset h3 { position: absolute; top: -7px; left: 11px; padding: 0 3px; background: #f0f0f0; }
.fieldset label { width: 35px; }
.entry { width: 262px; height: 20px; border: 2px solid; border-color: #666 #fff #fff #666; color: #777; line-height: 18px; padding-left: 2px; overflow: hidden; white-space: nowrap; letter-spacing: -.44px; }
.fieldset > svg { margin: -4px 0 0 9px; }
.fieldset b { font-weight: 400; margin-left: 22px; }
.scroll { width: 21px; display: flex; flex-direction: column; background: #f7f7f7; }
.sbtn, .thumb { background: #f0f0f0; border: solid; border-width: 1px 2px 2px 1px; border-color: #fff #777 #777 #fff; }
.sbtn { height: 21px; flex: none; display: grid; place-items: center; }
.thumb { height: 303px; flex: none; }
.thumb.small { height: 13px; }
.gap { flex: 1; }
.buttons { height: 26px; flex: none; margin: 6px 4px 0 2px; border-top: 2px solid #999; display: flex; gap: 5px; padding: 5px 0 0 101px; }
button { font: inherit; letter-spacing: inherit; color: #333; padding: 0; background: #f0f0f0; border: 2px solid; border-color: #fff #777 #777 #fff; }
.buttons button { width: 62px; height: 20px; }
.buttons .default { border: 2px solid #777; }
.vsash { width: 4px; margin-left: 6px; background: #ddd; border-left: 1px solid #fff; border-right: 2px solid #777; }

.right { margin-left: 7px; width: 1459px; display: flex; flex-direction: column; }
.right .sash { margin-top: 7px; }
.log-area { height: 115px; margin-top: 6px; display: flex; flex: none; }
.log { width: 1415px; background: #fff; border: 2px solid; border-color: #222 #e4e4e4 #e4e4e4 #222; padding: 7px 0 0 5px; color: #4a35f0; font: 10px/12.500px "Liberation Sans", sans-serif; letter-spacing: -.14px; }
.log-area .scroll { margin-left: 2px; }
.edge { margin-left: 7px; height: 146px; }
.log-foot { display: flex; align-items: center; margin: 3px 0 0 9px; height: 25px; }
.log-foot label { margin-left: 6px; width: 25px; }
.log-foot button { width: 30px; height: 25px; margin-right: 4px; }
.log-foot button:last-child { width: 32px; }

.mdi { position: absolute; left: 1877px; top: 42px; width: 20px; height: 21px; border: 2px solid; border-color: #fff #777 #777 #fff; display: grid; place-items: center; }
.float { position: absolute; left: 1537px; top: 137px; width: 365px; height: 76px; background: #f0f0f0; border: 4px solid; border-color: #fff #fff #aaa #fff; display: flex; flex-direction: column; box-shadow: inset 4px 3px #a2a2a2, inset 0 -3px #fff; padding: 3px 0 3px 4px; }
.float header { height: 22px; flex: none; background: #0000fa; color: #fff; font: 700 12px/24px "Liberation Sans", sans-serif; display: flex; justify-content: space-between; align-items: center; padding: 0 2px 0 8px; letter-spacing: .4px; }
.float header span { padding-top: 2px; }
.float header i { width: 20px; height: 20px; background: #f0f0f0; border: 1px solid; border-color: #fff #777 #777 #fff; display: grid; place-items: center; }
.float-tools { display: flex; gap: 2px; padding-top: 2px; }
.float-tools svg { height: 38px; }
.w38 { width: 38px; } .w23 { width: 23px; }
.up { border: 2px solid; border-color: #fff #888 #888 #fff; }
.down { background: #f6f6f6; border: 1px solid; border-color: #777 #fff #fff #777; }
.axis { font: 700 17px "Liberation Sans", sans-serif; fill: #999; letter-spacing: 0; }

.gh-card { position: absolute; left: 1812px; top: 45px; width: 69px; height: 69px; background: #fff; border: 1px solid #aaa; border-radius: 4px; box-shadow: 0 6px 10px rgba(0, 0, 0, .2); display: flex; flex-direction: column; align-items: center; padding-top: 12px; color: #111; font: 11px/16px "Open Sans", "Noto Sans", "Noto Sans CJK SC", sans-serif; letter-spacing: .4px; white-space: nowrap; }
.gh-card span { margin-top: 7px; }
.editor { position: absolute; left: 1405px; top: 1038px; width: 498px; height: 17px; background: #363b40; border-top: 1px solid #777; border-radius: 9px 0 0 0; box-shadow: 0 0 14px rgba(0, 0, 0, .3); overflow: hidden; display: flex; align-items: flex-start; padding: 8px 17px 0 15px; color: #eee; font: 16.500px/20px "Open Sans", "Noto Sans CJK SC", sans-serif; letter-spacing: -.4px; white-space: nowrap; }
.editor span { margin: -5px 0 0 9px; }
.editor svg:last-child { margin-left: auto; }
.ink { position: absolute; left: 0; top: 0; pointer-events: none; }
.note { position: absolute; left: 693px; top: 600px; font: 400 40.900px/50px "Noto Sans CJK SC", sans-serif; color: #ee1c24; letter-spacing: 0; white-space: nowrap; }
```
